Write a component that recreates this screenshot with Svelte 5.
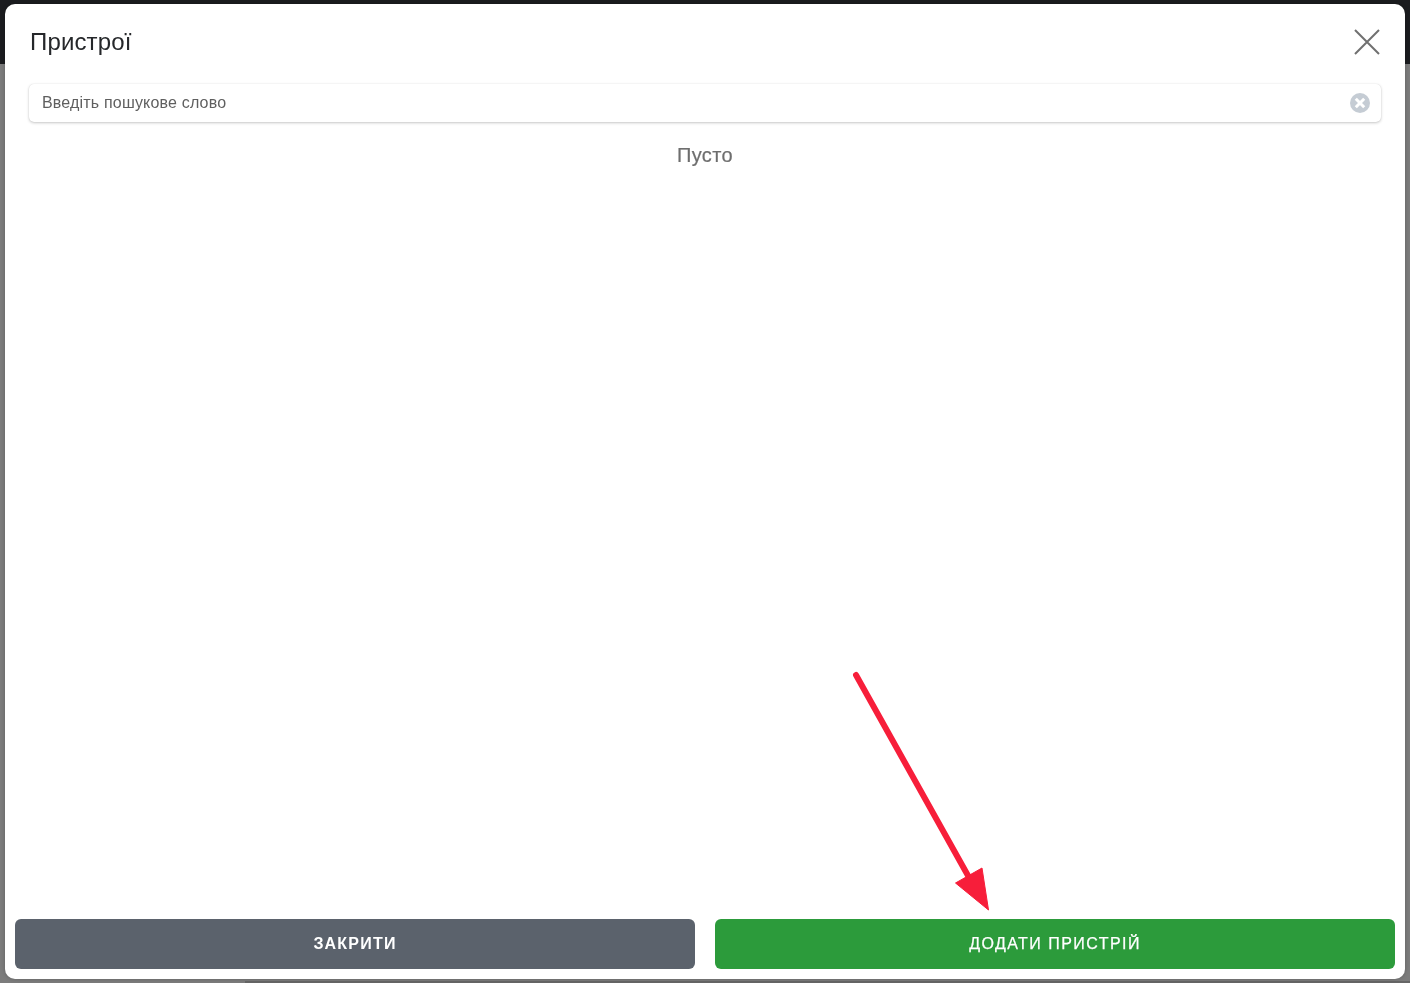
<script>
  let query = $state("");
</script>

<div class="page">
  <div class="topbar"></div>
  <div class="content"></div>
  <div class="foot"><div class="foot-side"></div><div class="foot-main"></div></div>
</div>

<div class="modal">
  <header>
    <h2>Пристрої</h2>
    <button class="close" aria-label="Закрити">
      <svg width="26" height="26" viewBox="0 0 26 26"><path d="M1 1L25 25M25 1L1 25" stroke="#707070" stroke-width="2" fill="none" /></svg>
    </button>
  </header>
  <div class="search">
    <input bind:value={query} placeholder="Введіть пошукове слово" />
    <svg class="clear" width="20" height="20" viewBox="0 0 20 20">
      <circle cx="10" cy="10" r="10" fill="#c5ccd4" />
      <path d="M5.800 5.800L14.200 14.200M14.200 5.800L5.800 14.200" stroke="#fff" stroke-width="3" fill="none" />
    </svg>
  </div>
  <p class="empty">Пусто</p>
  <footer>
    <button class="btn grey">ЗАКРИТИ</button>
    <button class="btn green">ДОДАТИ ПРИСТРІЙ</button>
  </footer>
</div>

<svg class="arrow" width="1410" height="983" viewBox="0 0 1410 983">
  <path d="M856 675L971 881" stroke="#f71e3a" stroke-width="6" stroke-linecap="round" fill="none" />
  <path d="M955.500 883L982 868L988.500 910Z" fill="#f71e3a" stroke="#f71e3a" stroke-width="1" stroke-linejoin="round" />
</svg>

<style>
  :global(body) {
    font-family: "Liberation Sans", Arial, sans-serif;
    overflow: hidden;
  }
  .page {
    height: 983px;
    display: flex;
    flex-direction: column;
    background: #7c7c7c;
  }
  .topbar {
    height: 64px;
    background: #1b1c1f;
  }
  .content {
    flex: 1;
  }
  .foot {
    display: flex;
    height: 2px;
  }
  .foot-side {
    width: 245px;
  }
  .foot-main {
    flex: 1;
    background: #666;
  }
  .modal {
    position: fixed;
    top: 4px;
    left: 5px;
    right: 5px;
    bottom: 4px;
    background: #fff;
    border-radius: 10px;
    box-shadow: 0 0 4px rgba(0, 0, 0, 0.22);
    display: flex;
    flex-direction: column;
    box-sizing: border-box;
    padding: 0 10px 10px;
  }
  header {
    display: flex;
    align-items: center;
    justify-content: space-between;
    height: 76px;
    padding: 0 15px;
  }
  h2 {
    margin: 0;
    font-size: 24px;
    font-weight: 400;
    letter-spacing: 0.15px;
    color: #25272a;
  }
  .close {
    background: none;
    border: 0;
    padding: 0;
    display: flex;
  }
  .search {
    margin: 4px 14px 0;
    height: 38px;
    box-sizing: border-box;
    background: #fff;
    border-radius: 5px;
    box-shadow: 0 1px 3px rgba(0, 0, 0, 0.22), 0 0 1px rgba(0, 0, 0, 0.12);
    display: flex;
    align-items: center;
    padding: 0 11px 0 13px;
  }
  input {
    flex: 1;
    border: 0;
    outline: 0;
    padding: 0;
    font: 16px "Liberation Sans", Arial, sans-serif;
    letter-spacing: 0.18px;
    color: #5f5f5f;
  }
  input::placeholder {
    color: #5f5f5f;
    opacity: 1;
  }
  .empty {
    flex: 1;
    margin: 21px 0 0;
    text-align: center;
    font-size: 20px;
    line-height: 24px;
    letter-spacing: 0.4px;
    color: #6e6e6e;
    -webkit-text-stroke: 0.2px #6e6e6e;
  }
  footer {
    display: grid;
    grid-template-columns: 1fr 1fr;
    gap: 20px;
  }
  .btn {
    height: 50px;
    border: 0;
    border-radius: 6px;
    color: #fff;
    font: 700 16px "Liberation Sans", Arial, sans-serif;
    letter-spacing: 1.2px;
  }
  .grey {
    background: #5b626c;
  }
  .green {
    background: #2c9b3b;
    font-weight: 400;
    letter-spacing: 1.45px;
    -webkit-text-stroke: 0.25px #fff;
  }
  .arrow {
    position: fixed;
    top: 0;
    left: 0;
    pointer-events: none;
  }
</style>
